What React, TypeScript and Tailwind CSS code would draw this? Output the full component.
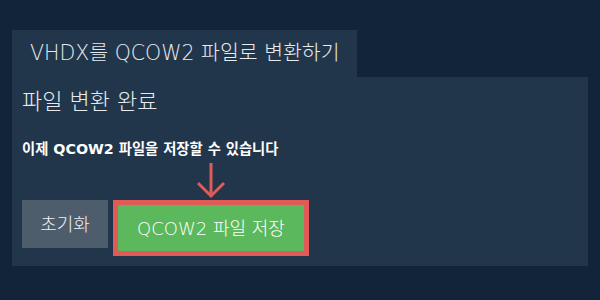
export default function App() {
  return (
    <div
      className="w-[600px] h-[300px] bg-[#12243a] pt-[30px] px-3"
      style={{ fontFamily: '"DejaVu Sans", "Noto Sans CJK KR", sans-serif' }}
    >
      <div className="inline-flex h-[47px] items-center bg-[#22364b] pl-[18px] pr-[17px] text-[20.5px] font-extralight text-[#e8ebee]">
        VHDX를 QCOW2 파일로 변환하기
      </div>
      <div className="h-[189px] bg-[#22364b] px-[10px] pt-[12px]">
        <div className="text-[22px] font-extralight leading-[26px] text-[#e8ebee]">파일 변환 완료</div>
        <div className="mt-[25px] text-[14.3px] font-bold leading-[18px] text-white">
          이제 QCOW2 파일을 저장할 수 있습니다
        </div>
        <div className="ml-[175px] mt-[5px] h-[36px] w-[30px]">
          <svg width="30" height="36" viewBox="0 0 30 36" fill="none" stroke="#e05a57" strokeWidth="3">
            <path d="M14 0 V33" />
            <path d="M1 20 L14 33 L27 20" />
          </svg>
        </div>
        <div className="mt-[1px] flex items-start gap-[5px]">
          <button className="flex h-[48px] w-[86px] items-center justify-center bg-[#4e5d6c] text-[18px] font-extralight text-[#eef0f2]">
            초기화
          </button>
          <div className="border-[5px] border-[#e05a57]">
            <button className="flex h-[46px] w-[186px] items-center justify-center bg-[#5cb85c] text-[18px] font-extralight text-white">
              QCOW2 파일 저장
            </button>
          </div>
        </div>
      </div>
    </div>
  );
}
